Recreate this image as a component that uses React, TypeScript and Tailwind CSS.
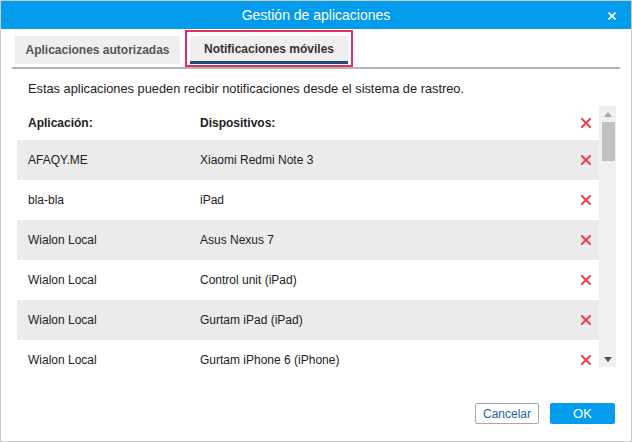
import React from "react";

const rows = [
  ["AFAQY.ME", "Xiaomi Redmi Note 3"],
  ["bla-bla", "iPad"],
  ["Wialon Local", "Asus Nexus 7"],
  ["Wialon Local", "Control unit (iPad)"],
  ["Wialon Local", "Gurtam iPad (iPad)"],
  ["Wialon Local", "Gurtam iPhone 6 (iPhone)"],
];

function RedX() {
  return (
    <svg width="10" height="10" viewBox="0 0 10 10" className="block">
      <path d="M1 1 L9 9 M9 1 L1 9" stroke="#f0404a" strokeWidth="2" strokeLinecap="square" />
    </svg>
  );
}

export default function App() {
  return (
    <div
      className="w-[632px] h-[442px] border border-[#cccccc] bg-white flex flex-col text-[#222]"
      style={{ fontFamily: '"Liberation Sans", Arial, sans-serif' }}
    >
      <div className="h-[28px] bg-[#039bec] flex items-center justify-center relative shrink-0">
        <span className="text-white text-[14px]">Gestión de aplicaciones</span>
        <svg width="8" height="8" viewBox="0 0 8 8" className="absolute right-[15px] top-[11px]">
          <path d="M0.5 0.5 L7.5 7.5 M7.5 0.5 L0.5 7.5" stroke="#fff" strokeWidth="1.6" />
        </svg>
      </div>
      <div className="flex pl-[14px] pt-[7px] shrink-0">
        <div className="w-[165px] h-[28px] bg-[#efefef] flex items-center justify-center text-[12px] font-bold text-[#555]">
          Aplicaciones autorizadas
        </div>
        <div className="relative ml-[10px]">
          <div className="w-[158px] h-[28px] bg-[#efefef] flex items-center justify-center text-[12px] font-bold text-[#333] border-b-[3px] border-[#1b4a78]">
            Notificaciones móviles
          </div>
          <div className="absolute -left-[5px] -top-[6px] -right-[5px] -bottom-[3px] border-2 border-[#ec2a5c]" />
        </div>
      </div>
      <div className="mx-[11px] mt-[3px] h-[2px] bg-[#b4b4b4] shrink-0" />
      <div className="pl-[27px] pt-[12px] text-[12.8px] leading-[15px] text-[#222]">
        Estas aplicaciones pueden recibir notificaciones desde el sistema de rastreo.
      </div>
      <div className="ml-[16px] mr-[15px] mt-[10px] h-[261px] flex overflow-hidden">
        <div className="flex-1 flex flex-col overflow-hidden">
          <div className="h-[34px] shrink-0 flex items-center text-[12px] font-bold text-[#222]">
            <div className="w-[183px] pl-[11px]">Aplicación:</div>
            <div className="flex-1">Dispositivos:</div>
            <div className="w-[30px] flex justify-end pr-[8px]"><RedX /></div>
          </div>
          {rows.map((r, i) => (
            <div
              key={i}
              className={`h-[40px] shrink-0 flex items-center text-[12px] text-[#222] ${i % 2 === 0 ? "bg-[#ebebeb]" : "bg-white"}`}
            >
              <div className="w-[183px] pl-[11px]">{r[0]}</div>
              <div className="flex-1">{r[1]}</div>
              <div className="w-[30px] flex justify-end pr-[8px]"><RedX /></div>
            </div>
          ))}
        </div>
        <div className="w-[17px] bg-[#f0f0f0] flex flex-col items-center shrink-0 relative">
          <div className="h-[16px] flex items-center justify-center">
            <svg width="8" height="5" viewBox="0 0 8 5"><path d="M0 5 L4 0 L8 5 Z" fill="#a8a8a8" /></svg>
          </div>
          <div className="w-[13px] h-[39px] bg-[#c1c1c1] ml-[1px]" />
          <div className="flex-1" />
          <div className="h-[16px] flex items-center justify-center">
            <svg width="8" height="5" viewBox="0 0 8 5"><path d="M0 0 L8 0 L4 5 Z" fill="#505050" /></svg>
          </div>
        </div>
      </div>
      <div className="flex-1" />
      <div className="flex justify-end gap-[11px] pr-[16px] pb-[17px]">
        <button className="w-[64px] h-[21px] border border-[#a8a8a8] rounded-[2px] bg-white text-[12px] text-[#1d5fa6] flex items-center justify-center">
          Cancelar
        </button>
        <button className="w-[65px] h-[21px] rounded-[2px] bg-[#039bec] text-[13px] text-white flex items-center justify-center">
          OK
        </button>
      </div>
    </div>
  );
}
